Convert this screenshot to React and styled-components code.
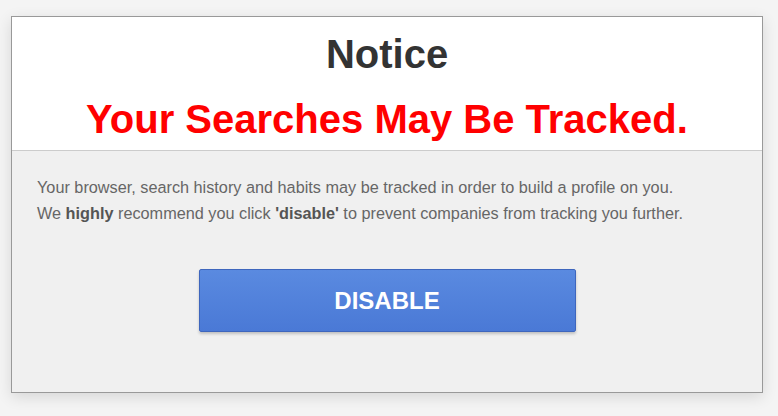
import React from "react";
import styled, { createGlobalStyle } from "styled-components";

const GlobalStyle = createGlobalStyle`
  html, body {
    margin: 0;
    padding: 0;
    background: #f4f4f4;
    font-family: "Liberation Sans", Arial, sans-serif;
  }
`;

const Page = styled.div`
  width: 778px;
  height: 416px;
  padding: 16px 0 0 11px;
  box-sizing: border-box;
`;

const Panel = styled.div`
  width: 752px;
  height: 377px;
  box-sizing: border-box;
  border: 1px solid #999;
  background: #f0f0f0;
  box-shadow: 0 4px 14px rgba(0, 0, 0, 0.12);
  display: flex;
  flex-direction: column;
`;

const Header = styled.div`
  background: #fff;
  border-bottom: 1px solid #ccc;
  height: 134px;
  box-sizing: border-box;
  display: flex;
  flex-direction: column;
  align-items: center;
  padding-top: 15px;
`;

const Title = styled.h1`
  margin: 0;
  font-size: 40px;
  font-weight: bold;
  color: #333;
  line-height: 44px;
`;

const Warning = styled.h2`
  margin: 21px 0 0;
  font-size: 40px;
  font-weight: bold;
  color: #f00;
  line-height: 44px;
`;

const Body = styled.div`
  padding: 23px 25px 0;
  display: flex;
  flex-direction: column;
`;

const Text = styled.p`
  margin: 0;
  font-size: 16.25px;
  line-height: 26px;
  color: #666;
  b {
    color: #555;
  }
`;

const Button = styled.button`
  align-self: center;
  margin-top: 43px;
  width: 377px;
  height: 63px;
  border: 1px solid #3e66bd;
  border-radius: 2px;
  background: linear-gradient(to bottom, #5a8ae0, #4a79d6);
  box-shadow: 0 2px 3px rgba(0, 0, 0, 0.2);
  color: #fff;
  font-family: "Liberation Sans", Arial, sans-serif;
  font-size: 24px;
  font-weight: bold;
  cursor: pointer;
`;

export default function App() {
  return (
    <Page>
      <GlobalStyle />
      <Panel>
        <Header>
          <Title>Notice</Title>
          <Warning>Your Searches May Be Tracked.</Warning>
        </Header>
        <Body>
          <Text>
            Your browser, search history and habits may be tracked in order to build a profile on you.
            <br />
            We <b>highly</b> recommend you click <b>'disable'</b> to prevent companies from tracking you further.
          </Text>
          <Button>DISABLE</Button>
        </Body>
      </Panel>
    </Page>
  );
}
